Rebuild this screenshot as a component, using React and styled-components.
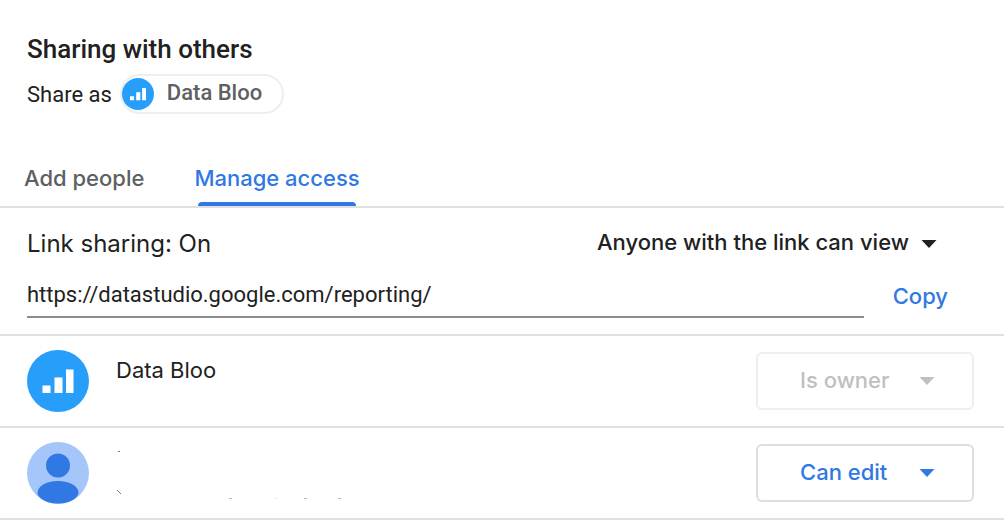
import React from "react";
import styled, { createGlobalStyle } from "styled-components";

const GlobalStyle = createGlobalStyle`
  *, *::before, *::after { box-sizing: border-box; }
  body { margin: 0; background: #fff; color: #212121; font-family: Roboto, sans-serif; }
  button, input, select { font: inherit; color: inherit; }
`;

const ui = `"Inter", sans-serif`;

const Dialog = styled.main`
  width: 100%;
`;

const Header = styled.header`
  padding: 32px 27px 0;
`;

const Title = styled.h1`
  margin: 0;
  font-size: 26px;
  line-height: 34px;
  font-weight: 500;
`;

const ShareAs = styled.div`
  display: flex;
  align-items: center;
  gap: 8px;
  margin-top: 8px;
  font-size: 22px;
  line-height: 28px;
`;

const ShareLabel = styled.span`
  padding-top: 2px;
`;

const Chip = styled.span`
  display: flex;
  align-items: center;
  gap: 13px;
  height: 40px;
  padding: 0 20px 0 0;
  border: 2px solid #ebeff4;
  border-radius: 20px;
  color: #5f6062;
  font-weight: 500;
`;

const ChipName = styled.span`
  padding-bottom: 2px;
`;

const Tabs = styled.nav`
  display: flex;
  gap: 50px;
  margin-top: 36px;
  padding: 0 24px;
  border-bottom: 2px solid #e0e0e0;
`;

const Tab = styled.button`
  display: flex;
  flex-direction: column;
  justify-content: space-between;
  height: 56px;
  padding: 14px 0 0;
  border: 0;
  background: none;
  font-family: ${ui};
  font-size: 22px;
  line-height: 28px;
  font-weight: 500;
  color: ${(p) => (p.$active ? "#3078e3" : "#5f6062")};

  &::after {
    content: "";
    align-self: stretch;
    height: 4px;
    margin: 0 4px;
    border-radius: 4px 4px 0 0;
    background: ${(p) => (p.$active ? "#3078e3" : "transparent")};
  }
`;

const LinkSection = styled.section`
  padding: 20px 56px 16px 27px;
  border-bottom: 2px solid #e0e0e0;
`;

const LinkRow = styled.div`
  display: flex;
  align-items: center;
  justify-content: space-between;
  padding-right: 11px;
`;

const LinkTitle = styled.h2`
  margin: 0;
  font-family: ${ui};
  font-size: 24px;
  line-height: 32px;
  font-weight: 400;
`;

const UrlRow = styled.div`
  display: flex;
  align-items: center;
  gap: 29px;
  margin-top: 18px;
`;

const UrlInput = styled.input`
  flex: 1;
  min-width: 0;
  height: 40px;
  padding: 0 0 6px;
  border: 0;
  border-bottom: 2px solid #8c8c8c;
  border-radius: 0;
  outline: 0;
  background: none;
  font-size: 22px;
`;

const CopyButton = styled.button`
  padding: 0 0 4px;
  border: 0;
  background: none;
  font-family: ${ui};
  font-size: 22px;
  line-height: 28px;
  font-weight: 500;
  color: #3078e3;
`;

const SelectBox = styled.div`
  display: grid;
  align-items: center;

  & > * { grid-area: 1 / 1; }
  & > svg {
    justify-self: end;
    margin-right: ${(p) => (p.$outlined ? "39px" : "0")};
    pointer-events: none;
    color: ${(p) => p.$color};
  }
`;

const PlainSelect = styled.select`
  appearance: none;
  padding: 0 28px 4px 0;
  border: 0;
  background: none;
  font-family: ${ui};
  font-size: 22px;
  line-height: 28px;
  font-weight: 500;
`;

const RoleSelect = styled.select`
  appearance: none;
  width: 218px;
  height: 58px;
  padding: 0 56px 2px 42px;
  border: 2px solid ${(p) => (p.disabled ? "#ebeff4" : "#dedfe1")};
  border-radius: 6px;
  background: #fff;
  font-family: ${ui};
  font-size: 22px;
  font-weight: 500;
  color: ${(p) => (p.disabled ? "#bfbfbf" : "#3078e3")};
  opacity: 1;
`;

const People = styled.ul`
  margin: 0;
  padding: 0;
  list-style: none;
`;

const Person = styled.li`
  display: flex;
  align-items: center;
  gap: 27px;
  min-height: 92px;
  padding: 0 30px 0 27px;
  border-bottom: 2px solid #e0e0e0;
`;

const PersonInfo = styled.div`
  flex: 1;
  align-self: flex-start;
  padding-top: 20px;
  font-family: ${ui};
  font-size: 22px;
  line-height: 28px;
`;

const Caret = () => (
  <svg width="16" height="8" viewBox="0 0 16 8" aria-hidden="true">
    <path d="M0.5 0H15.5L8 8Z" fill="currentColor" />
  </svg>
);

const BlooLogo = ({ size }) => (
  <svg width={size} height={size} viewBox="0 0 62 62" aria-hidden="true">
    <circle cx="31" cy="31" r="31" fill="#289efb" />
    <path d="M15.500 35.500h8v7.500h-8zM27.500 27.500h8v15.500h-8zM39 19.500h7.500v23.500h-7.500z" fill="#fff" />
  </svg>
);

const PersonAvatar = () => (
  <svg width="62" height="62" viewBox="0 0 62 62" aria-hidden="true">
    <circle cx="31" cy="31" r="31" fill="#a4c6fb" />
    <circle cx="31" cy="23.500" r="12" fill="#3078e3" />
    <path d="M10.500 51C10.500 44 19 39 31 39S51.500 44 51.500 51C51.500 55 44 61.500 31 61.500S10.500 55 10.500 51Z" fill="#3078e3" />
  </svg>
);

const RedactedDetails = () => (
  <svg width="230" height="52" viewBox="0 0 230 52" fill="none" stroke="#777" aria-hidden="true">
    <path d="M2 3.500h2M1 42l4 4" />
    <path d="M113 50.500h3M188 50.500h3M222 50.500h3" stroke="#bbb" />
    <path d="M159 50.500h2" stroke="#e6e6e6" />
  </svg>
);

const Role = ({ label, value, disabled }) => (
  <SelectBox $outlined $color={disabled ? "#bfbfbf" : "#3078e3"}>
    <RoleSelect aria-label={label} disabled={disabled} defaultValue={value}>
      <option>{value}</option>
    </RoleSelect>
    <Caret />
  </SelectBox>
);

export default function App() {
  return (
    <Dialog>
      <GlobalStyle />
      <Header>
        <Title>Sharing with others</Title>
        <ShareAs>
          <ShareLabel>Share as</ShareLabel>
          <Chip>
            <BlooLogo size={32} />
            <ChipName>Data Bloo</ChipName>
          </Chip>
        </ShareAs>
      </Header>
      <Tabs>
        <Tab type="button">Add people</Tab>
        <Tab type="button" $active aria-current="page">Manage access</Tab>
      </Tabs>
      <LinkSection>
        <LinkRow>
          <LinkTitle>Link sharing: On</LinkTitle>
          <SelectBox $color="#212121">
            <PlainSelect aria-label="Link access">
              <option>Anyone with the link can view</option>
            </PlainSelect>
            <Caret />
          </SelectBox>
        </LinkRow>
        <UrlRow>
          <UrlInput aria-label="Report link" readOnly value="https://datastudio.google.com/reporting/" />
          <CopyButton type="button">Copy</CopyButton>
        </UrlRow>
      </LinkSection>
      <People>
        <Person>
          <BlooLogo size={62} />
          <PersonInfo>Data Bloo</PersonInfo>
          <Role label="Role of Data Bloo" value="Is owner" disabled />
        </Person>
        <Person>
          <PersonAvatar />
          <PersonInfo>
            <RedactedDetails />
          </PersonInfo>
          <Role label="Role of second person" value="Can edit" />
        </Person>
      </People>
    </Dialog>
  );
}
